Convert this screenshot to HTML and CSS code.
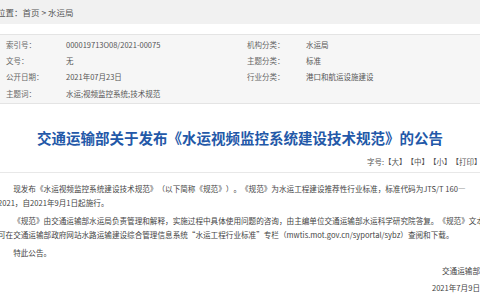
FILE: index.html
```html
<!DOCTYPE html>
<html lang="zh-CN">
<head>
    <meta charset="UTF-8">
    <title>交通运输部关于发布《水运视频监控系统建设技术规范》的公告</title>
    <link rel="stylesheet" href="styles.css">
</head>
<body>

<div class="crumb">位置：首页 &gt; 水运局</div>

<div class="meta">
    <span class="label">索引号：</span><span>000019713O08/2021-00075</span>
    <span class="label">机构分类：</span><span>水运局</span>

    <span class="label">文号：</span><span>无</span>
    <span class="label">主题分类：</span><span>标准</span>

    <span class="label">公开日期：</span><span>2021年07月23日</span>
    <span class="label">行业分类：</span><span>港口和航运设施建设</span>

    <span class="label">主题词：</span><span>水运;视频监控系统;技术规范</span>
    <span class="label"></span><span></span>
</div>

<h1 class="title">交通运输部关于发布《水运视频监控系统建设技术规范》的公告</h1>

<div class="tools">字号:【大】【中】【小】【打印】</div>

<div class="content">
    <p>现发布《水运视频监控系统建设技术规范》（以下简称《规范》）。《规范》为水运工程建设推荐性行业标准，标准代码为JTS/T 160—<br>2021，自2021年9月1日起施行。</p>
    <p>《规范》由交通运输部水运局负责管理和解释，实施过程中具体使用问题的咨询，由主编单位交通运输部水运科学研究院答复。《规范》文本<br>可在交通运输部政府网站水路运输建设综合管理信息系统“水运工程行业标准”专栏（mwtis.mot.gov.cn/syportal/sybz）查阅和下载。</p>
    <p>特此公告。</p>
    <div class="sign">
        <div>交通运输部</div>
        <div>2021年7月9日</div>
    </div>
</div>

</body>
</html>
```

FILE: styles.css
```css
* {
    box-sizing: border-box;
}
html, body {
    overflow: hidden;
}
body {
    margin: 0;
    width: 480px;
    height: 300px;
    background: #fff;
    font-family: "Noto Sans CJK SC", "Liberation Sans", sans-serif;
    color: #444;
    text-spacing-trim: space-all;
}
.crumb {
    height: 24px;
    line-height: 24px;
    background: #f1f1f1;
    font-size: 8.5px;
    color: #555;
    text-indent: -3px;
    margin-bottom: 10px;
}
.meta {
    display: grid;
    grid-template-columns: 60px 181px 59px 1fr;
    grid-auto-rows: 16.4px;
    align-items: center;
    padding: 1px 0 1px 6px;
    background: #f6f6f6;
    border-top: 1px solid #e4e4e4;
    border-bottom: 1px solid #e4e4e4;
    font-size: 7.5px;
    color: #555;
}
.meta .label {
    color: #666;
}
.title {
    margin: 24px 0 0;
    text-align: center;
    font-size: 14.5px;
    line-height: 20px;
    font-weight: bold;
    color: #2358a8;
    white-space: nowrap;
}
.tools {
    margin-top: 8px;
    padding: 0 0 4px 367px;
    font-size: 7.5px;
    line-height: 12px;
    color: #555;
    white-space: nowrap;
    border-bottom: 1px solid #e8e8e8;
}
.content {
    margin: 9px -6px 0 -2px;
    font-size: 7.6px;
    line-height: 14.5px;
    color: #444;
    white-space: nowrap;
}
.content p {
    margin: 0 0 3px;
    text-indent: 2em;
}
.sign {
    margin-top: -1px;
    text-align: right;
    line-height: 17px;
    padding-right: 6px;
}
```
